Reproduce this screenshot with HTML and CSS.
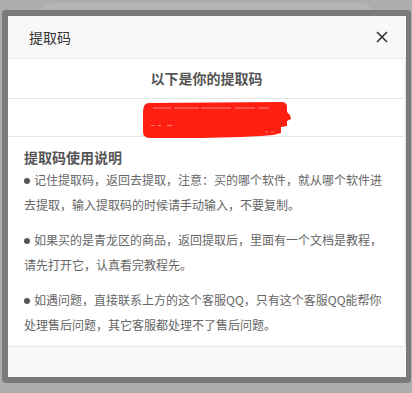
FILE: index.html
```html
<!DOCTYPE html>
<html lang="zh-CN">
<head>
    <meta charset="UTF-8">
    <meta name="viewport" content="width=device-width, initial-scale=1.0">
    <title>提取码</title>
    <link rel="stylesheet" href="styles.css">
</head>
<body>
    <div class="page-behind"></div>

    <div class="dialog">
        <div class="dialog-header">
            <span class="dialog-title">提取码</span>
            <span class="dialog-close">
                <svg width="12" height="12" viewBox="0 0 12 12">
                    <path d="M1 1 L11 11 M11 1 L1 11" stroke="#333" stroke-width="1.6" fill="none"/>
                </svg>
            </span>
        </div>

        <div class="dialog-body">
            <div class="code-row code-head">以下是你的提取码</div>
            <div class="code-row code-value">
                <svg class="scribble" width="150" height="39" viewBox="0 0 150 39">
                    <path d="M8 3 L140 2 Q146 2 146 7 L146 12 L149 15 L150 19 L146 21 L146 26 L140 27 L140 33 L132 35 L120 36 L100 37 L60 38 L10 38 Q2 38 2 32 L2 12 Q2 3 8 3 Z" fill="#fe1f12"/>
                    <path d="M12 8 L128 8" stroke="#fff" stroke-width="0.6" stroke-opacity="0.8" stroke-dasharray="18 3 25 2 30 4 20 3"/>
                    <path d="M10 25.5 L70 25.5" stroke="#fff" stroke-width="0.6" stroke-opacity="0.7" stroke-dasharray="4 3 3 6 5 40"/>
                    <path d="M124 32 L136 32" stroke="#fff" stroke-width="0.6" stroke-opacity="0.7" stroke-dasharray="3 3"/>
                </svg>
            </div>

            <div class="guide">
                <h3>提取码使用说明</h3>
                <p><span class="dot"></span>记住提取码，返回去提取，注意：买的哪个软件，就从哪个软件进去提取，输入提取码的时候请手动输入，不要复制。</p>
                <p><span class="dot"></span>如果买的是青龙区的商品，返回提取后，里面有一个文档是教程，请先打开它，认真看完教程先。</p>
                <p><span class="dot"></span>如遇问题，直接联系上方的这个客服QQ，只有这个客服QQ能帮你处理售后问题，其它客服都处理不了售后问题。</p>
            </div>
        </div>

        <div class="dialog-footer"></div>
    </div>
</body>
</html>
```

FILE: styles.css
```css
html, body {
    margin: 0;
    overflow: hidden;
}
body {
    font-family: "Microsoft YaHei", "Noto Sans CJK SC", sans-serif;
    background-color: #adadad;
    height: 393px;
}
.page-behind {
    margin: 3px 39px 0 40px;
    height: 370px;
    background-color: #b4b4b4;
    border-radius: 10px;
}
.dialog {
    position: absolute;
    top: 10px;
    left: 2px;
    width: 398px;
    border: 6px solid #7a7a7a;
    border-right-width: 5px;
    border-radius: 4px;
    background-color: #fff;
}
.dialog-header {
    height: 42px;
    padding: 0 18px 0 21px;
    background-color: #f8f8f8;
    border-bottom: 1px solid #e8e8e8;
    display: flex;
    justify-content: space-between;
    align-items: center;
}
.dialog-title {
    font-size: 14px;
    color: #333;
}
.dialog-close svg {
    display: block;
}
.dialog-body {
    border-right: 1px solid #e6e6e6;
    background-color: #fff;
}
.code-row {
    box-sizing: border-box;
    border-bottom: 1px solid #e6e6e6;
}
.code-head {
    height: 40px;
    line-height: 39px;
    text-align: center;
    font-size: 14px;
    font-weight: bold;
    color: #555;
}
.code-value {
    height: 38px;
    padding: 1px 0 0 133px;
    line-height: 0;
}
.scribble {
    display: inline-block;
    vertical-align: top;
}
.guide {
    padding: 10px 16px 9px;
}
.guide h3 {
    margin: 0;
    font-size: 14px;
    line-height: 20px;
    color: #555;
}
.guide p {
    margin: 0 0 10px;
    font-size: 12px;
    line-height: 25px;
    color: #666;
}
.guide p:last-child {
    margin-bottom: 0;
}
.dot {
    display: inline-block;
    width: 6px;
    height: 6px;
    margin: 0 4px 1px 0;
    border-radius: 50%;
    background-color: #555;
    vertical-align: middle;
}
.dialog-footer {
    height: 30px;
    background-color: #f8f8f8;
    border-top: 1px solid #e8e8e8;
}
```
